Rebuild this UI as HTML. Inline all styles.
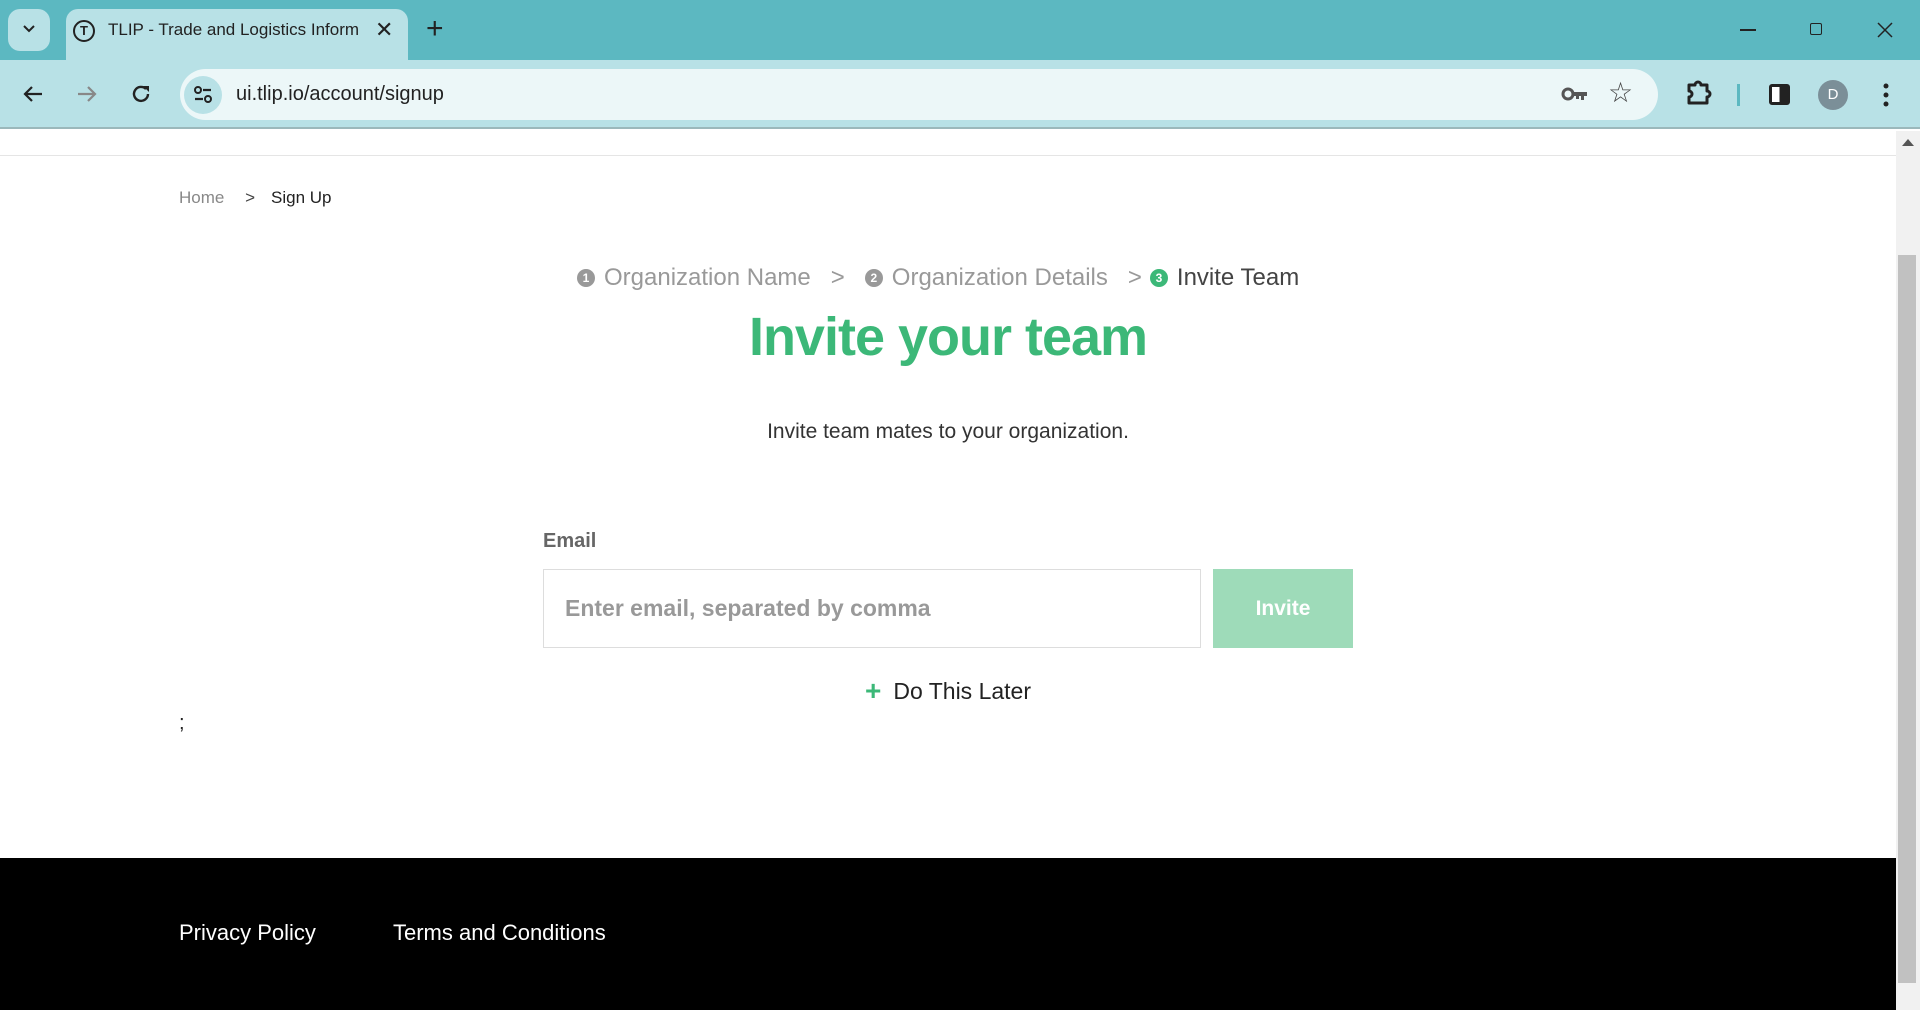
<!DOCTYPE html>
<html><head><meta charset="utf-8"><style>
*{box-sizing:border-box;margin:0;padding:0}
body{width:1920px;height:1010px;overflow:hidden;font-family:"Liberation Sans",sans-serif;background:#fff;position:relative}
.abs{position:absolute}
.tabs{left:0;top:0;width:1920px;height:60px;background:#5cb8c1}
.toolbar{left:0;top:60px;width:1920px;height:69px;background:#b8e1e6;border-bottom:2px solid #9bb8bb}
.tab{left:66px;top:9px;width:342px;height:52px;background:#b8e1e6;border-radius:12px 12px 0 0}
.omni{left:180px;top:69px;width:1478px;height:51px;background:#ecf7f8;border-radius:26px}
.txt{white-space:nowrap}
.num{display:inline-block;width:18px;height:18px;border-radius:50%;background:#999;color:#fff;font-size:12px;text-align:center;line-height:18px;margin-right:9px;font-weight:bold}
</style></head><body>
<div class="abs tabs"></div>
<div class="abs" style="left:8px;top:9px;width:42px;height:42px;background:#b8e1e6;border-radius:12px"></div>
<svg class="abs" style="left:22px;top:24px" width="14" height="10"><path d="M2 2l5 5 5-5" stroke="#222" stroke-width="2" fill="none"/></svg>
<div class="abs tab"></div>
<div class="abs" style="left:73px;top:20px;width:22px;height:22px;border:2px solid #222;border-radius:50%;font-size:13px;text-align:center;line-height:18px;font-weight:bold;color:#222">T</div>
<div class="abs txt" style="left:108px;top:20px;font-size:17px;color:#222;width:250px;overflow:hidden">TLIP - Trade and Logistics Inform</div>
<div class="abs" style="left:375px;top:17px;font-size:22px;color:#222">✕</div>
<div class="abs" style="left:426px;top:12px;font-size:30px;color:#222">+</div>
<div class="abs" style="left:1740px;top:29px;width:16px;height:1.5px;background:#222"></div>
<div class="abs" style="left:1810px;top:23px;width:12px;height:12px;border:1.5px solid #222;border-radius:2px"></div>
<svg class="abs" style="left:1877px;top:22px" width="16" height="16"><path d="M1 1L15 15M15 1L1 15" stroke="#222" stroke-width="1.5"/></svg>
<div class="abs toolbar"></div>
<div class="abs omni"></div>
<svg class="abs" style="left:22px;top:84px" width="22" height="20"><path d="M20 10H3M10 3L3 10l7 7" stroke="#222" stroke-width="2.2" fill="none"/></svg>
<svg class="abs" style="left:76px;top:84px" width="22" height="20"><path d="M2 10h17M12 3l7 7-7 7" stroke="#888" stroke-width="2.2" fill="none"/></svg>
<svg class="abs" style="left:130px;top:83px" width="22" height="22"><path d="M18 11a7 7 0 1 1-2-5" stroke="#222" stroke-width="2.4" fill="none"/><path d="M13 3h6v6z" fill="#222"/></svg>
<div class="abs" style="left:184px;top:76px;width:38px;height:38px;border-radius:50%;background:#b8e1e6"></div>
<svg class="abs" style="left:193px;top:85px" width="20" height="20"><circle cx="5" cy="5" r="3" stroke="#222" stroke-width="2" fill="none"/><path d="M10 5h8M2 14h8" stroke="#222" stroke-width="2.2"/><circle cx="15" cy="14" r="3" stroke="#222" stroke-width="2" fill="none"/></svg>
<div class="abs txt" style="left:236px;top:83px;font-size:20px;color:#222">ui.tlip.io/account/signup</div>
<svg class="abs" style="left:1561px;top:86px" width="28" height="16"><circle cx="7" cy="8" r="5" stroke="#555" stroke-width="3" fill="none"/><path d="M12 6h14v4h-3v4h-3v-4h-2v3h-3v-3h-3z" fill="#555"/></svg>
<div class="abs" style="left:1608px;top:76px;font-size:28px;color:#444">☆</div>
<svg class="abs" style="left:1686px;top:79px" width="26" height="26"><path d="M3 6h6a3 3 0 0 1 6 0h6v6a3 3 0 0 1 0 6v6H3v-6a3 3 0 0 0 0-6z" stroke="#222" stroke-width="3" fill="none" stroke-linejoin="round"/></svg>
<div class="abs" style="left:1737px;top:84px;width:3px;height:22px;background:#5cb8c1"></div>
<div class="abs" style="left:1769px;top:84px;width:21px;height:21px;border:3px solid #222;border-radius:3px;background:linear-gradient(90deg,#fff 50%,#222 50%)"></div>
<div class="abs" style="left:1818px;top:80px;width:30px;height:30px;border-radius:50%;background:#7b8f98;color:#fff;font-size:15px;text-align:center;line-height:30px">D</div>
<svg class="abs" style="left:1882px;top:83px" width="8" height="24"><circle cx="4" cy="3" r="2.5" fill="#222"/><circle cx="4" cy="12" r="2.5" fill="#222"/><circle cx="4" cy="21" r="2.5" fill="#222"/></svg>
<!-- page -->
<div class="abs" style="left:0;top:155px;width:1896px;height:1px;background:#e5e5e5"></div>
<div class="abs" style="left:1896px;top:131px;width:24px;height:879px;background:#f1f1f1"></div>
<div class="abs" style="left:1898px;top:255px;width:18px;height:728px;background:#c1c1c1"></div>
<div class="abs" style="left:1902px;top:139px;width:0;height:0;border-left:6px solid transparent;border-right:6px solid transparent;border-bottom:7px solid #555"></div>
<div class="abs txt" style="left:179px;top:188px;font-size:17px;color:#888">Home <span style="margin:0 16px;color:#444">&gt;</span><span style="color:#222">Sign Up</span></div>
<div class="abs txt" style="left:577px;top:264px;font-size:24px;color:#999;display:flex;align-items:center">
<span class="num">1</span>Organization Name<span style="margin:0 20px">&gt;</span>
<span class="num">2</span>Organization Details<span style="margin:0 8px 0 20px">&gt;</span>
<span class="num" style="background:#3cb878">3</span><span style="color:#444">Invite Team</span></div>
<div class="abs txt" style="left:0;width:1896px;text-align:center;top:306px;font-size:54px;font-weight:bold;color:#3cb878;letter-spacing:-1px">Invite your team</div>
<div class="abs txt" style="left:0;width:1896px;text-align:center;top:420px;font-size:21px;color:#333">Invite team mates to your organization.</div>
<div class="abs txt" style="left:543px;top:530px;font-size:20px;font-weight:bold;color:#666">Email</div>
<div class="abs" style="left:543px;top:569px;width:658px;height:79px;border:1.5px solid #ddd"></div>
<div class="abs txt" style="left:565px;top:595px;font-size:23px;font-weight:bold;color:#999">Enter email, separated by comma</div>
<div class="abs" style="left:1213px;top:569px;width:140px;height:79px;background:#9edbb9;color:#fff;font-size:21px;font-weight:bold;text-align:center;line-height:79px">Invite</div>
<div class="abs txt" style="left:0;width:1896px;text-align:center;top:675px;font-size:23px;color:#222"><span style="color:#3cb878;font-weight:bold;font-size:28px;margin-right:12px;vertical-align:-1px">+</span>Do This Later</div>
<div class="abs" style="left:179px;top:712px;font-size:20px;color:#222">;</div>
<div class="abs" style="left:0;top:858px;width:1896px;height:152px;background:#000"></div>
<div class="abs txt" style="left:179px;top:920px;font-size:22px;color:#fff">Privacy Policy</div>
<div class="abs txt" style="left:393px;top:920px;font-size:22px;color:#fff">Terms and Conditions</div>
</body></html>
